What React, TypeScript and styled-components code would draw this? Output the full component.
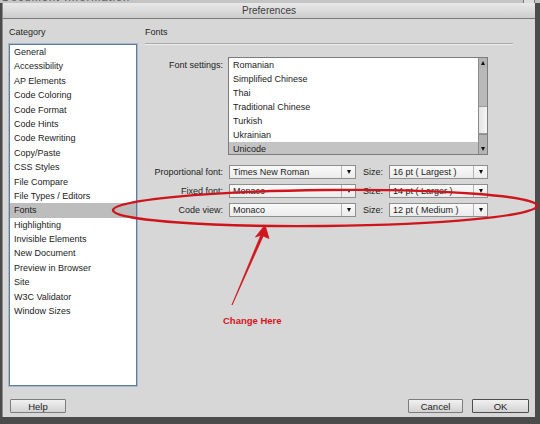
import React from 'react';
import styled, { createGlobalStyle } from 'styled-components';

const GlobalStyle = createGlobalStyle`
  html, body {
    margin: 0;
    padding: 0;
    background: #4b4b4b;
  }
  * {
    box-sizing: border-box;
  }
`;

const UI_FONT = `"Liberation Sans", Arial, sans-serif`;

const Screen = styled.div`
  position: relative;
  width: 540px;
  height: 424px;
  overflow: hidden;
  background: #4b4b4b;
  font-family: ${UI_FONT};
  font-size: 9px;
  color: #1b1b1b;
`;

const BackStrip = styled.div`
  display: flex;
  justify-content: space-between;
  height: 3px;
  overflow: hidden;
  background: #c4c4c4;
  padding-left: 2px;
`;

const BackTitle = styled.span`
  font-size: 11px;
  line-height: 11px;
  margin-top: -8px;
  color: #555;
  letter-spacing: 1px;
`;

const BackBox = styled.span`
  width: 12px;
  height: 6px;
  margin-top: -2px;
  margin-right: 5px;
  border: 1px solid #777;
  background: #ddd;
`;

const Dialog = styled.div`
  display: flex;
  flex-direction: column;
  width: 533px;
  height: 414px;
  margin-left: 2px;
  background: #d7d7d7;
  border-left: 1px solid #8c8c8c;
`;

const TitleBar = styled.div`
  height: 16px;
  display: flex;
  align-items: center;
  justify-content: center;
  background: linear-gradient(#e9e9e9, #cdcdcd);
  border-bottom: 1px solid #7b7b7b;
  font-size: 10px;
  color: #3b3b3b;
`;

const Main = styled.div`
  display: flex;
  gap: 8px;
  padding: 7px 22px 0 6px;
`;

const LeftColumn = styled.div`
  display: flex;
  flex-direction: column;
  width: 128px;
`;

const RightColumn = styled.div`
  flex: 1;
  display: flex;
  flex-direction: column;
`;

const Heading = styled.div`
  height: 12px;
  line-height: 12px;
  color: #1f1f1f;
`;

const CategoryList = styled.div`
  margin-top: 6px;
  height: 342px;
  background: #fff;
  border: 1px solid #5f7b99;
  box-shadow: 0 0 0 1px #a8b9cb;
  overflow: hidden;
`;

const Item = styled.div<{ $selected?: boolean }>`
  height: 14.4px;
  line-height: 14.4px;
  padding-left: 4px;
  white-space: nowrap;
  background: ${(p) => (p.$selected ? '#bdbdbd' : 'transparent')};
`;

const Rule = styled.div`
  margin-top: 5px;
  height: 2px;
  border-top: 1px solid #a9a9a9;
  border-bottom: 1px solid #efefef;
`;

const Form = styled.div`
  margin-top: 12px;
  display: grid;
  grid-template-columns: 78px 127px 21px 99px;
  column-gap: 6px;
  row-gap: 5px;
  align-items: center;
`;

const FieldLabel = styled.div<{ $top?: boolean }>`
  text-align: right;
  white-space: nowrap;
  align-self: ${(p) => (p.$top ? 'start' : 'center')};
  padding-top: ${(p) => (p.$top ? '1px' : '0')};
  line-height: 14px;
`;

const ListBox = styled.div`
  grid-column: 2 / -1;
  height: 98px;
  margin-left: -1px;
  margin-bottom: 5px;
  display: flex;
  background: #fff;
  border: 1px solid #7c7c7c;
  overflow: hidden;
`;

const ListItems = styled.div`
  flex: 1;
  overflow: hidden;
`;

const ListItem = styled(Item)`
  height: 14px;
  line-height: 14px;
  background: ${(p) => (p.$selected ? '#c3c3c3' : 'transparent')};
`;

const ScrollBar = styled.div`
  width: 9px;
  display: flex;
  flex-direction: column;
  border-left: 1px solid #8a8a8a;
  background: #b9b9b9;
`;

const ScrollButton = styled.div<{ $size: number; $down?: boolean }>`
  height: ${(p) => p.$size}px;
  display: flex;
  justify-content: center;
  align-items: ${(p) => (p.$down ? 'flex-end' : 'flex-start')};
  padding: ${(p) => (p.$down ? '0 0 3px' : '3px 0 0')};
  background: #b4b4b4;
  border-top: ${(p) => (p.$down ? '1px solid #8d8d8d' : 'none')};
`;

const ScrollTrack = styled.div<{ $size: number }>`
  height: ${(p) => p.$size}px;
  background: #b9b9b9;
`;

const ScrollThumb = styled.div`
  height: 28px;
  background: linear-gradient(90deg, #e4e4e4, #f6f6f6);
  border-top: 1px solid #9a9a9a;
  border-bottom: 1px solid #9a9a9a;
`;

const Triangle = styled.span<{ $up?: boolean }>`
  width: 0;
  height: 0;
  border-left: 2.5px solid transparent;
  border-right: 2.5px solid transparent;
  ${(p) =>
    p.$up ? 'border-bottom: 4px solid #111;' : 'border-top: 4px solid #111;'}
`;

const Select = styled.div`
  height: 14px;
  display: flex;
  align-items: stretch;
  background: linear-gradient(#fafafa, #ececec);
  border: 1px solid #8e8e8e;
`;

const SelectValue = styled.span`
  flex: 1;
  padding-left: 3px;
  line-height: 12px;
  white-space: nowrap;
  overflow: hidden;
`;

const SelectArrow = styled.span`
  width: 14px;
  display: flex;
  align-items: center;
  justify-content: center;
  border-left: 1px solid #b4b4b4;
`;

const Footer = styled.div`
  display: flex;
  gap: 9px;
  padding: 13px 6px 0 7px;
`;

const Spacer = styled.div`
  flex: 1;
`;

const Button = styled.button<{ $width: number; $default?: boolean }>`
  width: ${(p) => p.$width}px;
  height: 14px;
  padding: 0;
  font-family: ${UI_FONT};
  font-size: 9.5px;
  line-height: 11px;
  color: #1d1d1d;
  background: linear-gradient(#f1f1f1, #d3d3d3);
  border: ${(p) => (p.$default ? '1.5px solid #4e4e4e' : '1px solid #7c7c7c')};
  border-radius: 1px;
`;

const Annotation = styled.svg`
  position: absolute;
  left: 0;
  top: 0;
  pointer-events: none;
`;

const Callout = styled.div`
  position: absolute;
  left: 223px;
  top: 315px;
  font-family: ${UI_FONT};
  font-weight: bold;
  font-size: 9.5px;
  color: #d3161d;
`;

const categories = [
  'General',
  'Accessibility',
  'AP Elements',
  'Code Coloring',
  'Code Format',
  'Code Hints',
  'Code Rewriting',
  'Copy/Paste',
  'CSS Styles',
  'File Compare',
  'File Types / Editors',
  'Fonts',
  'Highlighting',
  'Invisible Elements',
  'New Document',
  'Preview in Browser',
  'Site',
  'W3C Validator',
  'Window Sizes',
];

const encodings = [
  'Romanian',
  'Simplified Chinese',
  'Thai',
  'Traditional Chinese',
  'Turkish',
  'Ukrainian',
  'Unicode',
];

const fontRows = [
  { label: 'Proportional font:', font: 'Times New Roman', size: '16 pt ( Largest )' },
  { label: 'Fixed font:', font: 'Monaco', size: '14 pt ( Larger )' },
  { label: 'Code view:', font: 'Monaco', size: '12 pt ( Medium )' },
];

const Dropdown: React.FC<{ value: string }> = ({ value }) => (
  <Select>
    <SelectValue>{value}</SelectValue>
    <SelectArrow>
      <Triangle />
    </SelectArrow>
  </Select>
);

const App: React.FC = () => {
  return (
    <Screen>
      <GlobalStyle />
      <BackStrip>
        <BackTitle>Document Information</BackTitle>
        <BackBox />
      </BackStrip>
      <Dialog>
        <TitleBar>Preferences</TitleBar>
        <Main>
          <LeftColumn>
            <Heading>Category</Heading>
            <CategoryList>
              {categories.map((c) => (
                <Item key={c} $selected={c === 'Fonts'}>
                  {c}
                </Item>
              ))}
            </CategoryList>
          </LeftColumn>
          <RightColumn>
            <Heading>Fonts</Heading>
            <Rule />
            <Form>
              <FieldLabel $top>Font settings:</FieldLabel>
              <ListBox>
                <ListItems>
                  {encodings.map((e) => (
                    <ListItem key={e} $selected={e === 'Unicode'}>
                      {e}
                    </ListItem>
                  ))}
                </ListItems>
                <ScrollBar>
                  <ScrollButton $size={10}>
                    <Triangle $up />
                  </ScrollButton>
                  <ScrollTrack $size={38} />
                  <ScrollThumb />
                  <ScrollButton $size={20} $down>
                    <Triangle />
                  </ScrollButton>
                </ScrollBar>
              </ListBox>
              {fontRows.map((r) => (
                <React.Fragment key={r.label}>
                  <FieldLabel>{r.label}</FieldLabel>
                  <Dropdown value={r.font} />
                  <FieldLabel>Size:</FieldLabel>
                  <Dropdown value={r.size} />
                </React.Fragment>
              ))}
            </Form>
          </RightColumn>
        </Main>
        <Footer>
          <Button $width={56}>Help</Button>
          <Spacer />
          <Button $width={55}>Cancel</Button>
          <Button $width={57} $default>
            OK
          </Button>
        </Footer>
      </Dialog>

      {/* red markup drawn over the dialog */}
      <Annotation width={540} height={424} viewBox="0 0 540 424">
        <ellipse
          cx={325}
          cy={208}
          rx={212}
          ry={18}
          fill="none"
          stroke="#cf141b"
          strokeWidth={2.4}
          transform="rotate(-0.6 325 208)"
        />
        <path
          d="M265 225 L255.5 237 L260.8 235.2 L232 305 L263.2 236 L269 238.5 Z"
          fill="#d0161c"
          stroke="#d0161c"
          strokeWidth={0.8}
          strokeLinejoin="round"
        />
      </Annotation>
      <Callout>Change Here</Callout>
    </Screen>
  );
};

export default App;
